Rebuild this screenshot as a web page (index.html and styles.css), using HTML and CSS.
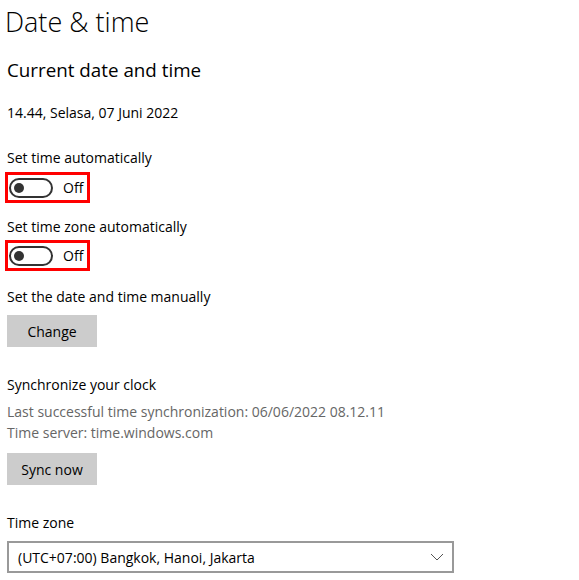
FILE: index.html
```html
<!DOCTYPE html>
<html lang="en">
  <head>
    <meta charset="UTF-8" />
    <title>Date &amp; time</title>
    <link rel="stylesheet" href="styles.css">
  </head>
  <body>
    <div class="page">
      <h1 class="title">Date &amp; time</h1>
      <h2 class="subtitle">Current date and time</h2>
      <p class="now">14.44, Selasa, 07 Juni 2022</p>

      <!-- automatic settings -->
      <p class="label first">Set time automatically</p>
      <div class="mark">
        <span class="toggle"><span class="knob"></span></span>
        <span class="state">Off</span>
      </div>

      <p class="label second">Set time zone automatically</p>
      <div class="mark mark-2">
        <span class="toggle"><span class="knob"></span></span>
        <span class="state">Off</span>
      </div>

      <p class="label manual">Set the date and time manually</p>
      <button class="btn">Change</button>

      <!-- sync -->
      <p class="label sync-title">Synchronize your clock</p>
      <p class="muted first-muted">Last successful time synchronization: 06/06/2022 08.12.11</p>
      <p class="muted">Time server: time.windows.com</p>
      <button class="btn btn-sync">Sync now</button>

      <p class="label zone-title">Time zone</p>
      <div class="select">
        <span>(UTC+07:00) Bangkok, Hanoi, Jakarta</span>
        <svg class="chevron" width="14" height="8" viewBox="0 0 14 8">
          <path d="M1 1 L7 7 L13 1" fill="none" stroke="#555" stroke-width="1" />
        </svg>
      </div>
    </div>
  </body>
</html>
```

FILE: styles.css
```css
* {
  box-sizing: border-box;
}
html,
body {
  margin: 0;
  background: #fff;
}
body {
  font-family: "Segoe UI", "Open Sans", sans-serif;
  color: #000;
  font-size: 14px;
}
.page {
  padding: 0 0 0 7px;
  display: flex;
  flex-direction: column;
  align-items: flex-start;
}
h1,
h2,
p {
  margin: 0;
}
.title {
  font-size: 27px;
  font-weight: 300;
  line-height: 36px;
  margin-top: 4px;
  margin-left: -2px;
}
.subtitle {
  font-size: 18.8px;
  font-weight: 400;
  line-height: 28px;
  margin-top: 16px;
}
.now {
  line-height: 20px;
  margin-top: 19px;
}
.label {
  line-height: 20px;
}
.label.first {
  margin-top: 25px;
}
.mark {
  display: flex;
  align-items: center;
  margin: 4px 0 0 -2px;
  width: 85px;
  height: 31px;
  border: 3px solid #f00;
  padding-left: 1px;
}
.mark.mark-2 {
  margin-top: 3px;
}
.label.second {
  margin-top: 14px;
}
.toggle {
  position: relative;
  width: 44px;
  height: 20px;
  border: 2px solid #333;
  border-radius: 10px;
}
.knob {
  position: absolute;
  left: 3px;
  top: 3px;
  width: 10px;
  height: 10px;
  border-radius: 50%;
  background: #333;
}
.state {
  margin-left: 10px;
  line-height: 20px;
}
.label.manual {
  margin-top: 16px;
}
.btn {
  font-family: inherit;
  font-size: 14px;
  color: #000;
  background: #ccc;
  border: none;
  width: 90px;
  height: 32px;
  padding: 0;
  margin-top: 8px;
}
.sync-title {
  margin-top: 28px;
}
.muted {
  color: #666;
  line-height: 21px;
}
.first-muted {
  margin-top: 6px;
}
.btn-sync {
  margin-top: 10px;
}
.zone-title {
  margin-top: 28px;
}
.select {
  display: flex;
  align-items: center;
  justify-content: space-between;
  width: 447px;
  height: 32px;
  margin-top: 8px;
  border: 2px solid #999;
  padding: 0 8px 0 9px;
}
.chevron {
  display: block;
}
```
